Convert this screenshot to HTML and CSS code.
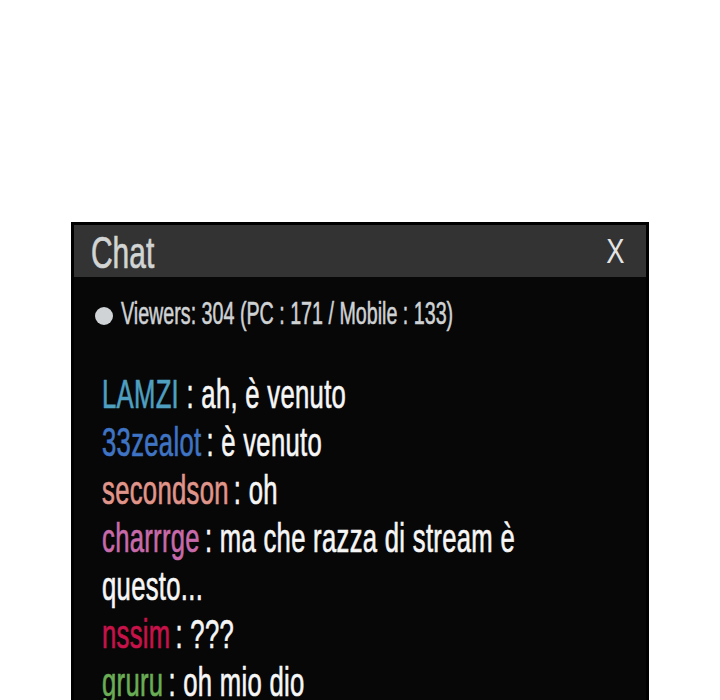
FILE: index.html
```html
<!DOCTYPE html>
<html lang="it">
<head>
    <meta charset="UTF-8">
    <meta name="viewport" content="width=device-width, initial-scale=1.0">
    <title>Chat</title>
    <link rel="stylesheet" href="styles.css">
</head>
<body>
    <div class="chat">
        <div class="chat-header">
            <span class="chat-title">Chat</span>
            <span class="chat-close">X</span>
        </div>
        <div class="chat-body">
            <div class="viewers">
                <span class="dot"></span>
                <span class="viewers-text">Viewers: 304 (PC : 171 / Mobile : 133)</span>
            </div>
            <div class="messages">
                <p class="msg"><span class="nick lamzi">LAMZI</span> : ah, è venuto</p>
                <p class="msg"><span class="nick zealot">33zealot</span>: è venuto</p>
                <p class="msg"><span class="nick secondson">secondson</span>: oh</p>
                <p class="msg"><span class="nick charrrge">charrrge</span>: ma che razza di stream è questo...</p>
                <p class="msg"><span class="nick nssim">nssim</span>: ???</p>
                <p class="msg"><span class="nick gruru">gruru</span>: oh mio dio</p>
            </div>
        </div>
    </div>
</body>
</html>
```

FILE: styles.css
```css
body {
    margin: 0;
    background-color: #ffffff;
    font-family: "Liberation Sans", Arial, sans-serif;
    overflow: hidden;
}
.chat {
    width: 578px;
    height: 700px;
    margin: 222px 0 0 71px;
    border: 3px solid #000;
    border-bottom: none;
    background-color: #070707;
    box-sizing: border-box;
    overflow: hidden;
}
.chat-header {
    display: flex;
    justify-content: space-between;
    align-items: flex-start;
    height: 52px;
    padding: 0 22px 0 17px;
    background-color: #333333;
}
.chat-title {
    display: inline-block;
    font-size: 44px;
    line-height: 52px;
    padding-top: 2px;
    color: #d2d4d4;
    -webkit-text-stroke: 0.7px #d2d4d4;
    transform: scaleX(0.68);
    transform-origin: left top;
}
.chat-close {
    display: inline-block;
    font-size: 35px;
    line-height: 52px;
    color: #e4e4e4;
    transform: scaleX(0.78);
    transform-origin: right top;
}
.chat-body {
    padding: 18px 0 0 21px;
}
.viewers {
    display: flex;
    align-items: center;
    height: 36px;
}
.dot {
    flex: none;
    width: 18px;
    height: 18px;
    margin: 6px 8px 0 0;
    border-radius: 50%;
    background-color: #cfd3d5;
}
.viewers-text {
    flex: none;
    display: inline-block;
    font-size: 32px;
    line-height: 36px;
    color: #cfd2d4;
    -webkit-text-stroke: 0.6px #cfd2d4;
    white-space: nowrap;
    transform: scaleX(0.615);
    transform-origin: left top;
}
.messages {
    margin: 39px 0 0 7px;
    width: 720px;
    transform: scaleX(0.625);
    transform-origin: left top;
}
.msg {
    margin: 0;
    font-size: 41px;
    line-height: 48px;
    letter-spacing: 0.5px;
    color: #f6f6f6;
    -webkit-text-stroke: 0.7px #f6f6f6;
}
.nick {
    margin-right: 8px;
}
.nick.lamzi { color: #4e9fc0; -webkit-text-stroke-color: #4e9fc0; margin-right: 0; }
.nick.zealot { color: #3f74c4; -webkit-text-stroke-color: #3f74c4; }
.nick.secondson { color: #e0958a; -webkit-text-stroke-color: #e0958a; }
.nick.charrrge { color: #c86aaa; -webkit-text-stroke-color: #c86aaa; }
.nick.nssim { color: #c8124a; -webkit-text-stroke-color: #c8124a; }
.nick.gruru { color: #6aad55; -webkit-text-stroke-color: #6aad55; }
```
